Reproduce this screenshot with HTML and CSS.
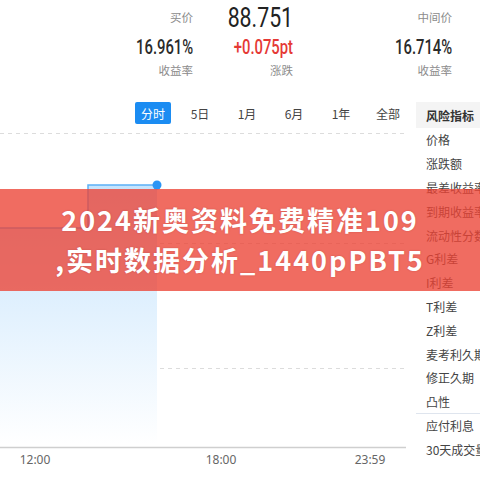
FILE: index.html
```html
<!DOCTYPE html>
<html lang="zh">
<head>
<meta charset="utf-8">
<link rel="stylesheet" href="styles.css">
</head>
<body>
<div class="page">
  <header class="stats">
    <div class="stat">
      <div class="stat-top"><span class="label">买价</span></div>
      <div class="stat-mid"><span class="num">16.961%</span></div>
      <div class="stat-bot"><span class="label">收益率</span></div>
    </div>
    <div class="stat">
      <div class="stat-top"><span class="big">88.751</span></div>
      <div class="stat-mid"><span class="num red">+0.075pt</span></div>
      <div class="stat-bot"><span class="label">涨跌</span></div>
    </div>
    <div class="stat">
      <div class="stat-top"><span class="label">中间价</span></div>
      <div class="stat-mid"><span class="num">16.714%</span></div>
      <div class="stat-bot"><span class="label">收益率</span></div>
    </div>
  </header>

  <main class="main">
    <section class="chart-col">
      <nav class="tabs">
        <span class="tab active">分时</span>
        <span class="tab">5日</span>
        <span class="tab">1月</span>
        <span class="tab">6月</span>
        <span class="tab">1年</span>
        <span class="tab">全部</span>
      </nav>
      <svg class="chart" width="416" height="356" viewBox="0 0 416 356">
        <defs>
          <linearGradient id="fillg" x1="0" y1="0" x2="0" y2="1">
            <stop offset="0" stop-color="#c6e4fd"/>
            <stop offset="1" stop-color="#ffffff"/>
          </linearGradient>
        </defs>
        <line x1="0" y1="9.5" x2="406" y2="9.5" class="grid"/>
        <line x1="0" y1="119.5" x2="406" y2="119.5" class="grid"/>
        <line x1="0" y1="244.5" x2="406" y2="244.5" class="grid"/>
        <polygon points="0,104 88,104 88,61 157,61 157,320 0,320" fill="url(#fillg)"/>
        <polyline points="0,104 88,104 88,61 157,61" class="price"/>
        <circle cx="157" cy="61" r="4.5" fill="#2b95f5"/>
        <line x1="0" y1="323.5" x2="406" y2="323.5" class="axis"/>
        <text x="35" y="340" class="tick">12:00</text>
        <text x="221" y="340" class="tick">18:00</text>
        <text x="370" y="340" class="tick">23:59</text>
      </svg>
    </section>
    <aside class="panel">
      <div class="panel-head">风险指标</div>
      <ul class="panel-list">
        <li>价格</li>
        <li>涨跌额</li>
        <li>最差收益率</li>
        <li>到期收益率</li>
        <li>流动性分数</li>
        <li>G利差</li>
        <li>I利差</li>
        <li>T利差</li>
        <li>Z利差</li>
        <li>麦考利久期</li>
        <li>修正久期</li>
        <li class="sep-after">凸性</li>
        <li>应付利息</li>
        <li>30天成交量</li>
      </ul>
    </aside>
  </main>

  <div class="banner">
    <p>2024新奥资料免费精准109</p>
    <p>,实时数据分析_1440pPBT5</p>
  </div>
</div>
</body>
</html>
```

FILE: styles.css
```css
* { box-sizing: border-box; }
html, body { margin: 0; padding: 0; }
body {
  width: 480px;
  height: 480px;
  overflow: hidden;
  background: #fff;
  font-family: "Noto Sans CJK SC", "Noto Sans", sans-serif;
  color: #333;
}
.page {
  position: relative;
  width: 480px;
  height: 480px;
  overflow: hidden;
}

/* top stats */
.stats {
  display: grid;
  grid-template-columns: 193px 100px 159px;
  height: 102px;
}
.stat {
  display: flex;
  flex-direction: column;
  align-items: flex-end;
}
.stat-top {
  height: 36px;
  display: flex;
  align-items: center;
}
.stat-mid {
  height: 24px;
  display: flex;
  align-items: center;
}
.stat-bot {
  height: 22px;
  display: flex;
  align-items: center;
}
.label {
  font-size: 11.5px;
  color: #8c8c8c;
  line-height: 1;
}
.big {
  display: inline-block;
  font-family: Roboto, "Liberation Sans", sans-serif;
  font-size: 28px;
  line-height: 1;
  color: #222;
  transform: scaleX(0.76);
  transform-origin: right center;
}
.num {
  display: inline-block;
  font-family: Roboto, "Liberation Sans", sans-serif;
  font-weight: 500;
  font-size: 19.5px;
  line-height: 1;
  color: #2b2b2b;
  transform: scaleX(0.76);
  transform-origin: right center;
}
.num.red { color: #e53935; }

/* main area */
.main {
  display: grid;
  grid-template-columns: 416px 64px;
}
.chart-col {
  display: flex;
  flex-direction: column;
}
.tabs {
  display: flex;
  gap: 11px;
  padding-left: 135px;
  height: 22px;
}
.tab {
  width: 36px;
  height: 22px;
  display: flex;
  align-items: center;
  justify-content: center;
  font-size: 12px;
  color: #444;
  border-radius: 2px;
}
.tab.active {
  background: #1b8cf2;
  color: #fff;
}
.chart { display: block; }
.grid {
  stroke: #dcdcdc;
  stroke-width: 1;
  stroke-dasharray: 4 4;
}
.axis {
  stroke: #cfcfcf;
  stroke-width: 1.5;
}
.price {
  fill: none;
  stroke: #5cb0f6;
  stroke-width: 1.5;
}
.tick {
  font-family: "Noto Sans", "Liberation Sans", sans-serif;
  font-size: 12px;
  fill: #666;
  text-anchor: middle;
}

/* right panel */
.panel {
  white-space: nowrap;
  overflow: hidden;
}
.panel-head {
  height: 26px;
  background: #f4f4f4;
  font-size: 12px;
  font-weight: 700;
  color: #333;
  padding-left: 10px;
  display: flex;
  align-items: center;
}
.panel-list {
  list-style: none;
  margin: 0;
  padding: 0;
}
.panel-list li {
  height: 23.8px;
  font-size: 12px;
  color: #444;
  padding-left: 10px;
  display: flex;
  align-items: center;
}
.panel-list li.sep-after {
  border-bottom: 1px solid #dfe5ee;
}

/* overlay banner */
.banner {
  position: absolute;
  left: 0;
  top: 189px;
  width: 480px;
  height: 102px;
  background: rgba(236, 66, 52, 0.78);
  display: flex;
  flex-direction: column;
  justify-content: center;
  align-items: center;
}
.banner p {
  margin: 0;
  color: #fff;
  font-family: "Noto Sans CJK SC", "Noto Sans", sans-serif;
  font-weight: 700;
  font-size: 27px;
  letter-spacing: 2px;
  line-height: 40px;
  white-space: nowrap;
  text-shadow: 0 0 2px rgba(120, 20, 20, 0.25);
}
```
